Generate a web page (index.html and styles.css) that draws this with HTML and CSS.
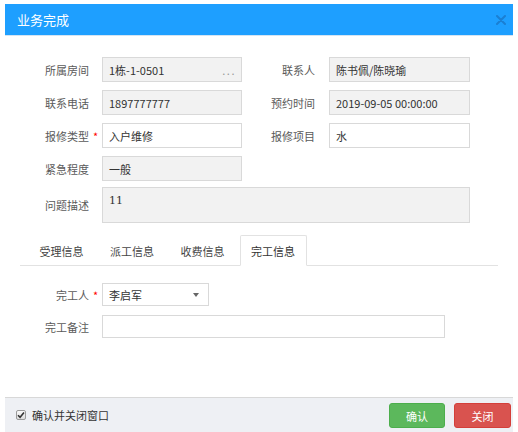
FILE: index.html
```html
<!DOCTYPE html>
<html lang="zh-CN">
<head>
<meta charset="utf-8">
<title>业务完成</title>
<link rel="stylesheet" href="styles.css">
</head>
<body>
<div class="dialog">
  <div class="header">
    <span class="title">业务完成</span>
    <svg class="close" width="10" height="10" viewBox="0 0 10 10"><path d="M1 1L9 9M9 1L1 9" stroke="#1a7fd3" stroke-width="2" stroke-linecap="round"/></svg>
  </div>
  <div class="body">
    <div class="form">
      <div class="label">所属房间</div>
      <div class="input ro"><span>1栋-1-0501</span><span class="dots">...</span></div>
      <div class="label label-r">联系人</div>
      <div class="input ro">陈书佩/陈晓瑜</div>

      <div class="label">联系电话</div>
      <div class="input ro">1897777777</div>
      <div class="label label-r">预约时间</div>
      <div class="input ro">2019-09-05 00:00:00</div>

      <div class="label"><span class="req-wrap">报修类型<span class="star">*</span></span></div>
      <div class="input">入户维修</div>
      <div class="label label-r">报修项目</div>
      <div class="input">水</div>

      <div class="label">紧急程度</div>
      <div class="input ro">一般</div>
      <div></div>
      <div></div>

      <div class="label desc-label">问题描述</div>
      <div class="textarea">11</div>
    </div>

    <div class="tabs">
      <div class="tab">受理信息</div>
      <div class="tab">派工信息</div>
      <div class="tab">收费信息</div>
      <div class="tab active">完工信息</div>
    </div>

    <div class="pane">
      <div class="label"><span class="req-wrap">完工人<span class="star">*</span></span></div>
      <div class="select"><span>李启军</span><span class="caret"></span></div>
      <div class="label">完工备注</div>
      <div class="input wide"></div>
    </div>
  </div>
  <div class="footer">
    <div class="check">
      <span class="box"><svg width="8" height="8" viewBox="0 0 8 8"><path d="M1 4.2L3.1 6.3L7 1.6" fill="none" stroke="#333" stroke-width="1.6"/></svg></span>
      <span>确认并关闭窗口</span>
    </div>
    <div class="buttons">
      <div class="btn ok">确认</div>
      <div class="btn cancel">关闭</div>
    </div>
  </div>
</div>
</body>
</html>
```

FILE: styles.css
```css
* { box-sizing: border-box; }
html, body { margin: 0; padding: 0; background: #fff; }
body {
  font-family: "Noto Sans CJK SC", "Noto Sans", sans-serif;
  font-size: 11px;
  color: #333;
}
.dialog {
  margin: 4px 0 0 5px;
  width: 508px;
  height: 428px;
  display: flex;
  flex-direction: column;
  background: #fff;
}
.header {
  height: 32px;
  flex: none;
  background: #1e9fff;
  border-bottom: 1px solid #d3e4f3;
  display: flex;
  align-items: center;
  justify-content: space-between;
  padding: 0 7px 0 12px;
}
.title { color: #fff; font-size: 13px; line-height: 16px; }
.close { display: block; }
.body { flex: 1; padding-top: 21px; }
.form {
  display: grid;
  grid-template-columns: 97px 140px 87px 141px;
  grid-template-rows: repeat(4, 25px) 36px;
  row-gap: 8px;
}
.label {
  display: flex;
  align-items: center;
  justify-content: flex-end;
  padding-right: 13px;
  color: #5a5a5a;
  white-space: nowrap;
}
.label-r { padding-right: 14px; }
.req-wrap { position: relative; }
.star {
  position: absolute;
  left: 100%;
  top: 0;
  margin-left: 4px;
  color: #f00;
}
.input {
  display: flex;
  align-items: center;
  justify-content: space-between;
  padding: 0 5px 0 6px;
  border: 1px solid #d9d9d9;
  background: #fff;
  color: #333;
  white-space: nowrap;
}
.input.ro { background: #f2f2f2; }
.dots { color: #999; letter-spacing: 1.5px; }
.form > .desc-label { margin-top: -2px; height: 36px; }
.form > .textarea {
  grid-column: 2 / 5;
  height: 36px;
  margin-top: -2px;
  border: 1px solid #d9d9d9;
  background: #f2f2f2;
  padding: 5px 6px;
  font-family: "DejaVu Serif", serif;
  font-size: 11px;
  line-height: 16px;
}
.tabs {
  margin: 10px 15px 0;
  padding-left: 8px;
  height: 31px;
  border-bottom: 1px solid #e2e2e2;
  display: flex;
  gap: 3.5px;
}
.tab {
  width: 67px;
  height: 31px;
  display: flex;
  align-items: center;
  justify-content: center;
  color: #444;
  border: 1px solid transparent;
}
.tab.active {
  background: #fff;
  border-color: #e2e2e2;
  border-bottom-color: #fff;
  border-radius: 2px 2px 0 0;
  color: #333;
}
.pane {
  margin-top: 17px;
  display: grid;
  grid-template-columns: 97px auto;
  grid-auto-rows: 23px;
  row-gap: 9px;
  justify-items: start;
}
.pane .label { justify-self: stretch; }
.select {
  width: 107px;
  height: 23px;
  border: 1px solid #d9d9d9;
  background: #fff;
  display: flex;
  align-items: center;
  justify-content: space-between;
  padding: 0 9px 0 6px;
  color: #333;
}
.caret {
  width: 0;
  height: 0;
  border-left: 3px solid transparent;
  border-right: 3px solid transparent;
  border-top: 4px solid #666;
}
.input.wide { width: 343px; height: 23px; }
.footer {
  height: 35px;
  flex: none;
  border-top: 1px solid #d8d8d8;
  background: #eef0f4;
  display: flex;
  align-items: center;
  justify-content: space-between;
  padding: 0 2px 0 11px;
}
.check { display: flex; align-items: center; gap: 6px; color: #333; }
.box {
  width: 10px;
  height: 10px;
  border: 1px solid #9a9a9a;
  border-radius: 2px;
  background: linear-gradient(#fafafa, #dcdcdc);
  display: flex;
  align-items: center;
  justify-content: center;
}
.box svg { display: block; }
.buttons { display: flex; gap: 9px; margin-top: 1px; }
.btn {
  width: 56px;
  height: 25px;
  border-radius: 3px;
  color: #fff;
  display: flex;
  align-items: center;
  justify-content: center;
}
.btn.ok { background: #5cb85c; border: 1px solid #4cae4c; }
.btn.cancel { width: 57px; background: #d9534f; border: 1px solid #d43f3a; }
```
